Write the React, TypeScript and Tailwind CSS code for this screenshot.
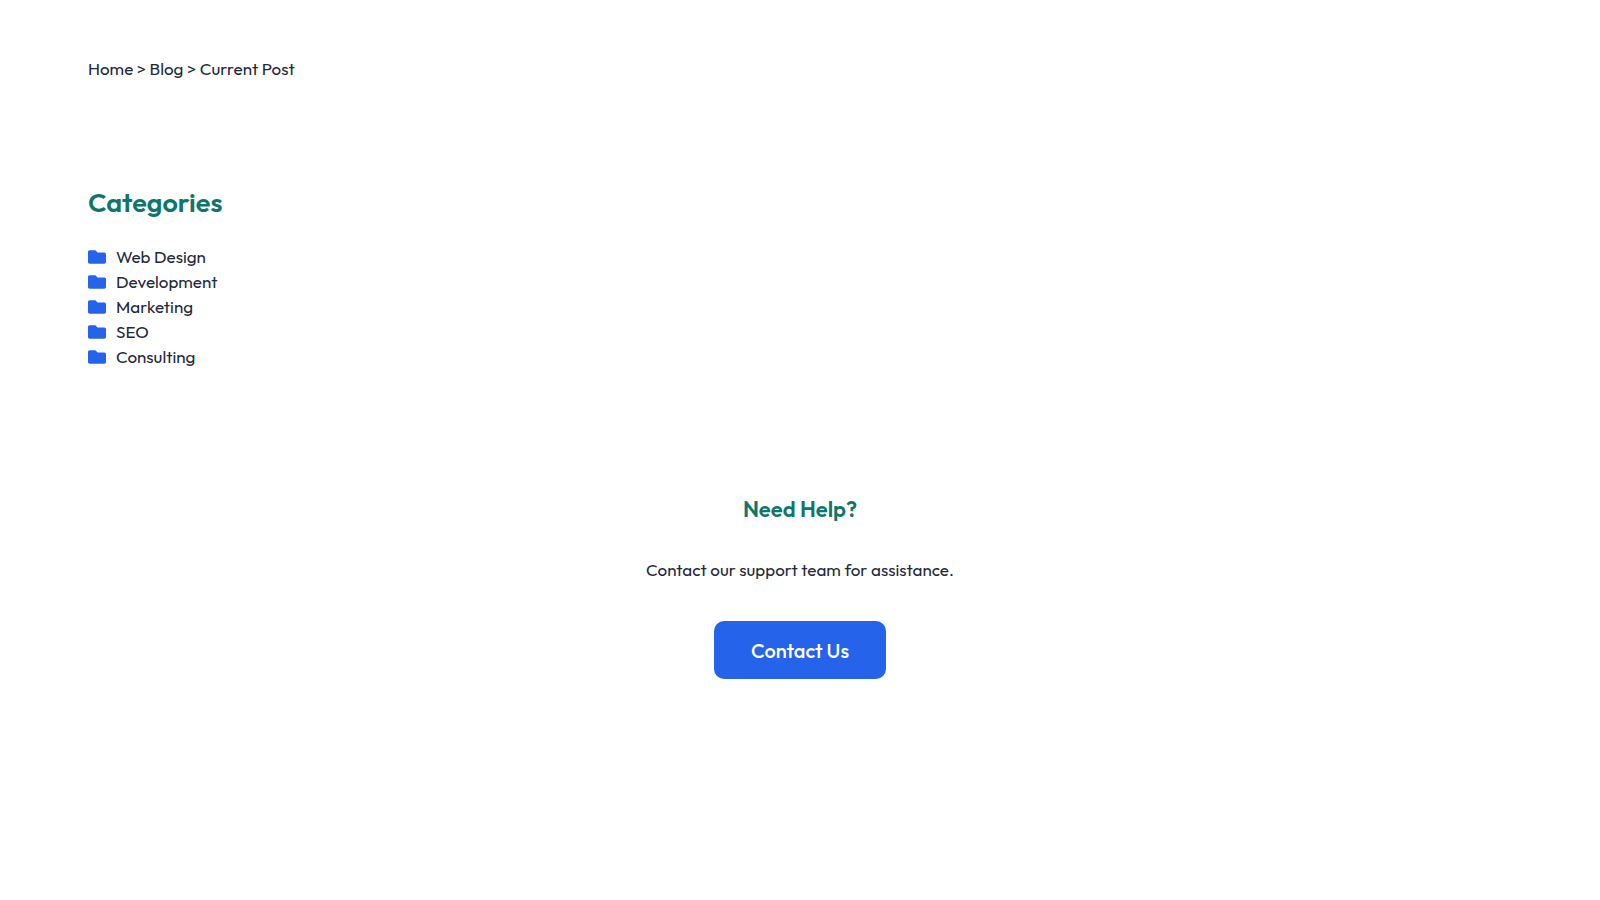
const FONT = "font-['Outfit','Lato',sans-serif]";

const categories = ["Web Design", "Development", "Marketing", "SEO", "Consulting"];

function FolderIcon() {
  return (
    <svg
      className="h-[18px] w-[18px] shrink-0 text-[#2563eb]"
      viewBox="0 0 512 512"
      fill="currentColor"
      aria-hidden="true"
    >
      <path d="M464 128H272l-54.63-54.63c-6-6-14.14-9.37-22.63-9.37H48C21.49 64 0 85.49 0 112v288c0 26.51 21.49 48 48 48h416c26.51 0 48-21.49 48-48V176c0-26.51-21.49-48-48-48z" />
    </svg>
  );
}

function Breadcrumbs() {
  return (
    <nav aria-label="Breadcrumb" className="pt-14">
      <a href="#">Home</a> &gt; <a href="#">Blog</a> &gt;{" "}
      <span aria-current="page">Current Post</span>
    </nav>
  );
}

function Categories() {
  return (
    <section className="pt-[99px]">
      <h2 className="text-[27px] leading-[44px] font-semibold text-[#0f766e]">Categories</h2>
      <ul className="mt-5">
        {categories.map((category) => (
          <li key={category}>
            <a href="#" className="inline-flex items-center gap-[10px] align-top">
              <FolderIcon />
              {category}
            </a>
          </li>
        ))}
      </ul>
    </section>
  );
}

function NeedHelp() {
  return (
    <section className="flex flex-col items-center pt-[124px] text-center">
      <h3 className="text-[22px] leading-8 font-semibold text-[#0f766e]">Need Help?</h3>
      <p className="mt-8">Contact our support team for assistance.</p>
      <button
        type="button"
        className="mt-[39px] h-[58px] rounded-[10px] bg-[#2563eb] px-[37px] text-[20px] font-medium text-white"
      >
        Contact Us
      </button>
    </section>
  );
}

export default function App() {
  return (
    <main
      className={`${FONT} min-h-screen bg-white px-[88px] pb-14 text-[17px] leading-[25px] text-[#1e293b]`}
    >
      <Breadcrumbs />
      <Categories />
      <NeedHelp />
    </main>
  );
}
